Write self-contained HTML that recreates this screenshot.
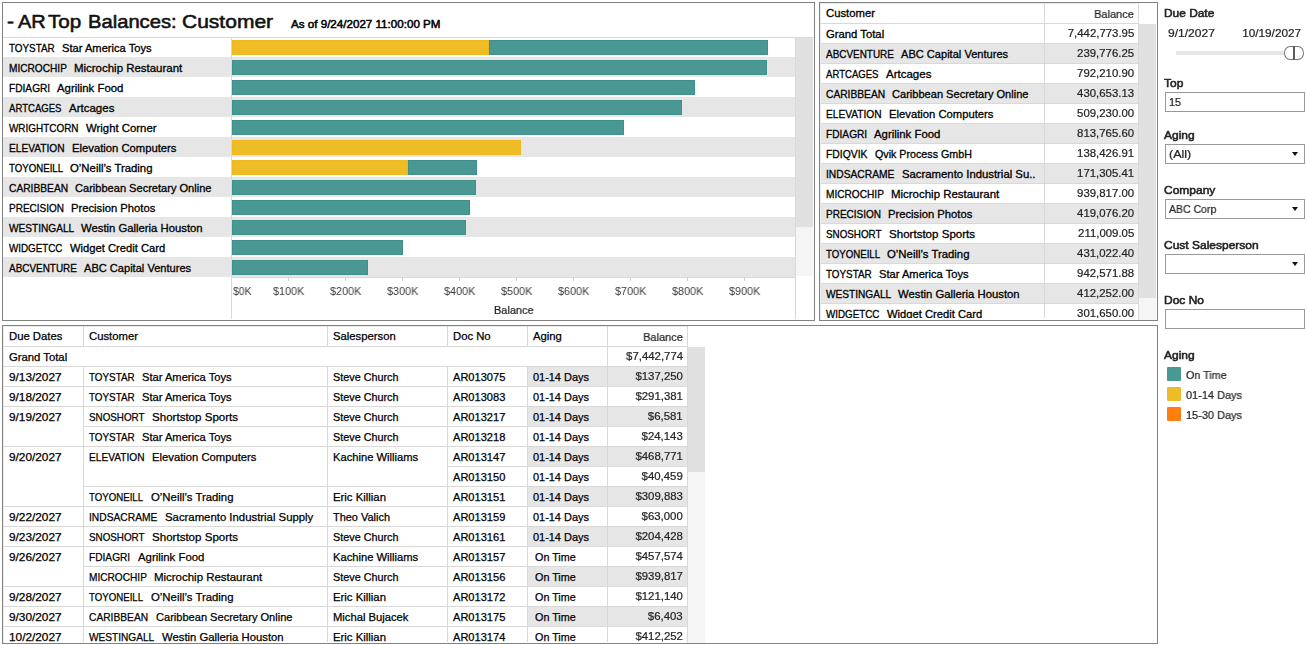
<!DOCTYPE html>
<html lang="en"><head><meta charset="utf-8"><title>AR Top Balances: Customer</title>
<style>
*{box-sizing:border-box;margin:0;padding:0}
html,body{width:1307px;height:645px;overflow:hidden;background:#fff}
body{position:relative;font-family:"Liberation Sans",sans-serif;font-size:11px;color:#111}
.panel{position:absolute;border:1px solid #828282;background:#fff}
.t{position:absolute;white-space:pre;line-height:14px;height:14px;font-size:11px;transform-origin:0 50%}
.m{color:#000;-webkit-text-stroke:0.3px #000}
.a{color:#3c3c3c;will-change:transform}
.n{color:#000;-webkit-text-stroke:0.25px #000}
.g{color:#242424;-webkit-text-stroke:0.22px #242424;will-change:transform}
.s{color:#222;-webkit-text-stroke:0.55px #222;will-change:transform}
.r{transform-origin:100% 50%}
.b{position:absolute}
</style></head>
<body>
<div class="panel" style="left:2px;top:2px;width:813px;height:319px"></div>
<h1 style="font-weight:normal;font-size:inherit">
<span class="t" style="left:7.20px;top:7.5px;height:28px;line-height:28px;font-size:18.5px;-webkit-text-stroke:0.55px #111;transform:scaleX(1.1342)">-</span>
<span class="t" style="left:17.60px;top:7.5px;height:28px;line-height:28px;font-size:18.5px;-webkit-text-stroke:0.55px #111;transform:scaleX(1.0777)">AR</span>
<span class="t" style="left:47.90px;top:7.5px;height:28px;line-height:28px;font-size:18.5px;-webkit-text-stroke:0.55px #111;transform:scaleX(1.1130)">Top</span>
<span class="t" style="left:88.10px;top:7.5px;height:28px;line-height:28px;font-size:18.5px;-webkit-text-stroke:0.55px #111;transform:scaleX(1.0905)">Balances:</span>
<span class="t" style="left:182.00px;top:7.5px;height:28px;line-height:28px;font-size:18.5px;-webkit-text-stroke:0.55px #111;transform:scaleX(1.1359)">Customer</span>
</h1>
<div class="t m" style="left:291.00px;top:17px;transform:scaleX(1.0551);-webkit-text-stroke:0.5px #000;">As of 9/24/2027 11:00:00 PM</div>
<div class="b" style="left:3px;top:37px;width:811px;height:1px;background:#d9d9d9;"></div>
<div class="t m" style="left:9.00px;top:41px;transform:scaleX(0.8972);">TOYSTAR</div>
<div class="t m" style="left:61.90px;top:41px;transform:scaleX(1.0130);">Star America Toys</div>
<div class="b" style="left:232px;top:40px;width:257px;height:15px;background:#EEBC27;border:1px solid #f0b81c"></div>
<div class="b" style="left:489px;top:40px;width:279px;height:15px;background:#499894;border:1px solid #3f8f8b"></div>
<div class="b" style="left:3px;top:57px;width:792px;height:20px;background:#e6e6e6;"></div>
<div class="t m" style="left:9.00px;top:61px;transform:scaleX(0.9197);">MICROCHIP</div>
<div class="t m" style="left:74.10px;top:61px;transform:scaleX(1.0410);">Microchip Restaurant</div>
<div class="b" style="left:232px;top:60px;width:535px;height:15px;background:#499894;border:1px solid #3f8f8b"></div>
<div class="t m" style="left:9.00px;top:81px;transform:scaleX(0.9232);">FDIAGRI</div>
<div class="t m" style="left:57.40px;top:81px;transform:scaleX(1.0342);">Agrilink Food</div>
<div class="b" style="left:232px;top:80px;width:463px;height:15px;background:#499894;border:1px solid #3f8f8b"></div>
<div class="b" style="left:3px;top:97px;width:792px;height:20px;background:#e6e6e6;"></div>
<div class="t m" style="left:9.00px;top:101px;transform:scaleX(0.8705);">ARTCAGES</div>
<div class="t m" style="left:68.70px;top:101px;transform:scaleX(1.0456);">Artcages</div>
<div class="b" style="left:232px;top:100px;width:450px;height:15px;background:#499894;border:1px solid #3f8f8b"></div>
<div class="t m" style="left:9.00px;top:121px;transform:scaleX(0.9026);">WRIGHTCORN</div>
<div class="t m" style="left:85.70px;top:121px;transform:scaleX(1.0327);">Wright Corner</div>
<div class="b" style="left:232px;top:120px;width:392px;height:15px;background:#499894;border:1px solid #3f8f8b"></div>
<div class="b" style="left:3px;top:137px;width:792px;height:20px;background:#e6e6e6;"></div>
<div class="t m" style="left:9.00px;top:141px;transform:scaleX(0.9250);">ELEVATION</div>
<div class="t m" style="left:71.80px;top:141px;transform:scaleX(1.0224);">Elevation Computers</div>
<div class="b" style="left:232px;top:140px;width:289px;height:15px;background:#EEBC27;border:1px solid #f0b81c"></div>
<div class="t m" style="left:9.00px;top:161px;transform:scaleX(0.8790);">TOYONEILL</div>
<div class="t m" style="left:70.30px;top:161px;transform:scaleX(1.0327);">O’Neill’s Trading</div>
<div class="b" style="left:232px;top:160px;width:176px;height:15px;background:#EEBC27;border:1px solid #f0b81c"></div>
<div class="b" style="left:408px;top:160px;width:69px;height:15px;background:#499894;border:1px solid #3f8f8b"></div>
<div class="b" style="left:3px;top:177px;width:792px;height:20px;background:#e6e6e6;"></div>
<div class="t m" style="left:9.00px;top:181px;transform:scaleX(0.9296);">CARIBBEAN</div>
<div class="t m" style="left:75.30px;top:181px;transform:scaleX(1.0055);">Caribbean Secretary Online</div>
<div class="b" style="left:232px;top:180px;width:244px;height:15px;background:#499894;border:1px solid #3f8f8b"></div>
<div class="t m" style="left:9.00px;top:201px;transform:scaleX(0.9089);">PRECISION</div>
<div class="t m" style="left:71.20px;top:201px;transform:scaleX(1.0212);">Precision Photos</div>
<div class="b" style="left:232px;top:200px;width:238px;height:15px;background:#499894;border:1px solid #3f8f8b"></div>
<div class="b" style="left:3px;top:217px;width:792px;height:20px;background:#e6e6e6;"></div>
<div class="t m" style="left:9.00px;top:221px;transform:scaleX(0.9195);">WESTINGALL</div>
<div class="t m" style="left:81.40px;top:221px;transform:scaleX(1.0270);">Westin Galleria Houston</div>
<div class="b" style="left:232px;top:220px;width:234px;height:15px;background:#499894;border:1px solid #3f8f8b"></div>
<div class="t m" style="left:9.00px;top:241px;transform:scaleX(0.8916);">WIDGETCC</div>
<div class="t m" style="left:69.60px;top:241px;transform:scaleX(1.0177);">Widget Credit Card</div>
<div class="b" style="left:232px;top:240px;width:171px;height:15px;background:#499894;border:1px solid #3f8f8b"></div>
<div class="b" style="left:3px;top:257px;width:792px;height:20px;background:#e6e6e6;"></div>
<div class="t m" style="left:9.00px;top:261px;transform:scaleX(0.9031);">ABCVENTURE</div>
<div class="t m" style="left:84.10px;top:261px;transform:scaleX(1.0067);">ABC Capital Ventures</div>
<div class="b" style="left:232px;top:260px;width:136px;height:15px;background:#499894;border:1px solid #3f8f8b"></div>
<div class="b" style="left:231px;top:38px;width:1px;height:281px;background:#d9d9d9;"></div>
<div class="b" style="left:795px;top:38px;width:1px;height:281px;background:#d9d9d9;"></div>
<div class="b" style="left:232px;top:277px;width:563px;height:1px;background:#d9d9d9;"></div>
<div class="b" style="left:796px;top:38px;width:17px;height:238px;background:#f5f5f5;"></div>
<div class="b" style="left:796px;top:38px;width:17px;height:189px;background:#e0e0e0;"></div>
<div class="t a" style="left:232.50px;top:284px;transform:scaleX(0.9500);">$0K</div>
<div class="b" style="left:288px;top:277px;width:1px;height:4px;background:#cfcfcf;"></div>
<div class="t a" style="left:272.85px;top:284px;transform:scaleX(0.9839);">$100K</div>
<div class="b" style="left:345px;top:277px;width:1px;height:4px;background:#cfcfcf;"></div>
<div class="t a" style="left:329.85px;top:284px;transform:scaleX(0.9839);">$200K</div>
<div class="b" style="left:402px;top:277px;width:1px;height:4px;background:#cfcfcf;"></div>
<div class="t a" style="left:386.85px;top:284px;transform:scaleX(0.9839);">$300K</div>
<div class="b" style="left:459px;top:277px;width:1px;height:4px;background:#cfcfcf;"></div>
<div class="t a" style="left:443.85px;top:284px;transform:scaleX(0.9839);">$400K</div>
<div class="b" style="left:516px;top:277px;width:1px;height:4px;background:#cfcfcf;"></div>
<div class="t a" style="left:500.85px;top:284px;transform:scaleX(0.9839);">$500K</div>
<div class="b" style="left:573px;top:277px;width:1px;height:4px;background:#cfcfcf;"></div>
<div class="t a" style="left:557.85px;top:284px;transform:scaleX(0.9839);">$600K</div>
<div class="b" style="left:630px;top:277px;width:1px;height:4px;background:#cfcfcf;"></div>
<div class="t a" style="left:614.85px;top:284px;transform:scaleX(0.9839);">$700K</div>
<div class="b" style="left:687px;top:277px;width:1px;height:4px;background:#cfcfcf;"></div>
<div class="t a" style="left:671.85px;top:284px;transform:scaleX(0.9839);">$800K</div>
<div class="b" style="left:744px;top:277px;width:1px;height:4px;background:#cfcfcf;"></div>
<div class="t a" style="left:728.85px;top:284px;transform:scaleX(0.9839);">$900K</div>
<div class="t g" style="left:493.95px;top:303px;transform:scaleX(0.9933);">Balance</div>
<div class="panel" style="left:819px;top:2px;width:339px;height:319px"></div>
<div class="b" style="left:820px;top:3px;width:319px;height:1px;background:#ececec;"></div>
<div class="b" style="left:820px;top:3px;width:1px;height:317px;background:#ececec;"></div>
<div class="t m" style="left:826.00px;top:6px;transform:scaleX(1.0260);">Customer</div>
<div class="t r g" style="right:173.00px;top:7px;transform:scaleX(0.9933);">Balance</div>
<div class="b" style="left:820px;top:23px;width:319px;height:1px;background:#d9d9d9;"></div>
<div class="t m" style="left:826.00px;top:27px;transform:scaleX(1.0260);">Grand Total</div>
<div class="t r g" style="right:173.00px;top:26px;transform:scaleX(1.0350);">7,442,773.95</div>
<div class="b" style="left:820px;top:43px;width:319px;height:1px;background:#d9d9d9;"></div>
<div class="b" style="left:821px;top:44px;width:318px;height:19px;background:#e6e6e6;"></div>
<div class="b" style="left:821px;top:63px;width:318px;height:1px;background:#d9d9d9;"></div>
<div class="t m" style="left:826.00px;top:47px;transform:scaleX(0.9031);">ABCVENTURE</div>
<div class="t m" style="left:901.10px;top:47px;transform:scaleX(1.0067);">ABC Capital Ventures</div>
<div class="t r g" style="right:173.00px;top:46px;transform:scaleX(1.0350);">239,776.25</div>
<div class="b" style="left:821px;top:83px;width:318px;height:1px;background:#d9d9d9;"></div>
<div class="t m" style="left:826.00px;top:67px;transform:scaleX(0.8705);">ARTCAGES</div>
<div class="t m" style="left:885.70px;top:67px;transform:scaleX(1.0456);">Artcages</div>
<div class="t r g" style="right:173.00px;top:66px;transform:scaleX(1.0350);">792,210.90</div>
<div class="b" style="left:821px;top:84px;width:318px;height:19px;background:#e6e6e6;"></div>
<div class="b" style="left:821px;top:103px;width:318px;height:1px;background:#d9d9d9;"></div>
<div class="t m" style="left:826.00px;top:87px;transform:scaleX(0.9296);">CARIBBEAN</div>
<div class="t m" style="left:892.30px;top:87px;transform:scaleX(1.0055);">Caribbean Secretary Online</div>
<div class="t r g" style="right:173.00px;top:86px;transform:scaleX(1.0350);">430,653.13</div>
<div class="b" style="left:821px;top:123px;width:318px;height:1px;background:#d9d9d9;"></div>
<div class="t m" style="left:826.00px;top:107px;transform:scaleX(0.9250);">ELEVATION</div>
<div class="t m" style="left:888.80px;top:107px;transform:scaleX(1.0224);">Elevation Computers</div>
<div class="t r g" style="right:173.00px;top:106px;transform:scaleX(1.0350);">509,230.00</div>
<div class="b" style="left:821px;top:124px;width:318px;height:19px;background:#e6e6e6;"></div>
<div class="b" style="left:821px;top:143px;width:318px;height:1px;background:#d9d9d9;"></div>
<div class="t m" style="left:826.00px;top:127px;transform:scaleX(0.9232);">FDIAGRI</div>
<div class="t m" style="left:874.40px;top:127px;transform:scaleX(1.0342);">Agrilink Food</div>
<div class="t r g" style="right:173.00px;top:126px;transform:scaleX(1.0350);">813,765.60</div>
<div class="b" style="left:821px;top:163px;width:318px;height:1px;background:#d9d9d9;"></div>
<div class="t m" style="left:826.00px;top:147px;transform:scaleX(0.9428);">FDIQVIK</div>
<div class="t m" style="left:874.70px;top:147px;transform:scaleX(0.9725);">Qvik Process GmbH</div>
<div class="t r g" style="right:173.00px;top:146px;transform:scaleX(1.0350);">138,426.91</div>
<div class="b" style="left:821px;top:164px;width:318px;height:19px;background:#e6e6e6;"></div>
<div class="b" style="left:821px;top:183px;width:318px;height:1px;background:#d9d9d9;"></div>
<div class="t m" style="left:826.00px;top:167px;transform:scaleX(0.9326);">INDSACRAME</div>
<div class="t m" style="left:901.60px;top:167px;transform:scaleX(1.0299);">Sacramento Industrial Su..</div>
<div class="t r g" style="right:173.00px;top:166px;transform:scaleX(1.0350);">171,305.41</div>
<div class="b" style="left:821px;top:203px;width:318px;height:1px;background:#d9d9d9;"></div>
<div class="t m" style="left:826.00px;top:187px;transform:scaleX(0.9197);">MICROCHIP</div>
<div class="t m" style="left:891.10px;top:187px;transform:scaleX(1.0410);">Microchip Restaurant</div>
<div class="t r g" style="right:173.00px;top:186px;transform:scaleX(1.0350);">939,817.00</div>
<div class="b" style="left:821px;top:204px;width:318px;height:19px;background:#e6e6e6;"></div>
<div class="b" style="left:821px;top:223px;width:318px;height:1px;background:#d9d9d9;"></div>
<div class="t m" style="left:826.00px;top:207px;transform:scaleX(0.9089);">PRECISION</div>
<div class="t m" style="left:888.20px;top:207px;transform:scaleX(1.0212);">Precision Photos</div>
<div class="t r g" style="right:173.00px;top:206px;transform:scaleX(1.0350);">419,076.20</div>
<div class="b" style="left:821px;top:243px;width:318px;height:1px;background:#d9d9d9;"></div>
<div class="t m" style="left:826.00px;top:227px;transform:scaleX(0.8931);">SNOSHORT</div>
<div class="t m" style="left:888.70px;top:227px;transform:scaleX(1.0508);">Shortstop Sports</div>
<div class="t r g" style="right:173.00px;top:226px;transform:scaleX(1.0350);">211,009.05</div>
<div class="b" style="left:821px;top:244px;width:318px;height:19px;background:#e6e6e6;"></div>
<div class="b" style="left:821px;top:263px;width:318px;height:1px;background:#d9d9d9;"></div>
<div class="t m" style="left:826.00px;top:247px;transform:scaleX(0.8790);">TOYONEILL</div>
<div class="t m" style="left:887.30px;top:247px;transform:scaleX(1.0327);">O’Neill’s Trading</div>
<div class="t r g" style="right:173.00px;top:246px;transform:scaleX(1.0350);">431,022.40</div>
<div class="b" style="left:821px;top:283px;width:318px;height:1px;background:#d9d9d9;"></div>
<div class="t m" style="left:826.00px;top:267px;transform:scaleX(0.8972);">TOYSTAR</div>
<div class="t m" style="left:878.90px;top:267px;transform:scaleX(1.0130);">Star America Toys</div>
<div class="t r g" style="right:173.00px;top:266px;transform:scaleX(1.0350);">942,571.88</div>
<div class="b" style="left:821px;top:284px;width:318px;height:19px;background:#e6e6e6;"></div>
<div class="b" style="left:821px;top:303px;width:318px;height:1px;background:#d9d9d9;"></div>
<div class="t m" style="left:826.00px;top:287px;transform:scaleX(0.9195);">WESTINGALL</div>
<div class="t m" style="left:898.40px;top:287px;transform:scaleX(1.0270);">Westin Galleria Houston</div>
<div class="t r g" style="right:173.00px;top:286px;transform:scaleX(1.0350);">412,252.00</div>
<div class="t m" style="left:826.00px;top:307px;transform:scaleX(0.8916);">WIDGETCC</div>
<div class="t m" style="left:886.60px;top:307px;transform:scaleX(1.0177);">Widget Credit Card</div>
<div class="t r g" style="right:173.00px;top:306px;transform:scaleX(1.0350);">301,650.00</div>
<div class="b" style="left:1044px;top:3px;width:1px;height:317px;background:#d9d9d9;"></div>
<div class="b" style="left:1138px;top:3px;width:1px;height:317px;background:#d9d9d9;"></div>
<div class="b" style="left:1139px;top:24px;width:17px;height:296px;background:#f5f5f5;"></div>
<div class="b" style="left:1139px;top:24px;width:17px;height:274px;background:#e0e0e0;"></div>
<div class="panel" style="left:2px;top:325px;width:1156px;height:319px"></div>
<div class="t n" style="left:9.00px;top:329px;transform:scaleX(1.0260);">Due Dates</div>
<div class="t n" style="left:89.00px;top:329px;transform:scaleX(1.0260);">Customer</div>
<div class="t n" style="left:333.00px;top:329px;transform:scaleX(1.0260);">Salesperson</div>
<div class="t n" style="left:453.00px;top:329px;transform:scaleX(1.0260);">Doc No</div>
<div class="t n" style="left:533.00px;top:329px;transform:scaleX(1.0260);">Aging</div>
<div class="t r g" style="right:624.00px;top:330px;transform:scaleX(0.9933);">Balance</div>
<div class="t n" style="left:9.00px;top:350px;transform:scaleX(1.0260);">Grand Total</div>
<div class="t r g" style="right:624.00px;top:349px;transform:scaleX(1.0350);">$7,442,774</div>
<div class="b" style="left:527px;top:367px;width:160px;height:19px;background:#e6e6e6;"></div>
<div class="t n" style="left:9.00px;top:370px;transform:scaleX(1.0748);">9/13/2027</div>
<div class="t n" style="left:89.20px;top:370px;transform:scaleX(0.8972);">TOYSTAR</div>
<div class="t n" style="left:142.10px;top:370px;transform:scaleX(1.0130);">Star America Toys</div>
<div class="t n" style="left:333.00px;top:370px;transform:scaleX(0.9827);">Steve Church</div>
<div class="t n" style="left:453.00px;top:370px;transform:scaleX(1.0058);">AR013075</div>
<div class="t n" style="left:533.00px;top:370px;transform:scaleX(0.9935);">01-14 Days</div>
<div class="t r g" style="right:624.00px;top:369px;transform:scaleX(1.0350);">$137,250</div>
<div class="t n" style="left:9.00px;top:390px;transform:scaleX(1.0748);">9/18/2027</div>
<div class="t n" style="left:89.20px;top:390px;transform:scaleX(0.8972);">TOYSTAR</div>
<div class="t n" style="left:142.10px;top:390px;transform:scaleX(1.0130);">Star America Toys</div>
<div class="t n" style="left:333.00px;top:390px;transform:scaleX(0.9827);">Steve Church</div>
<div class="t n" style="left:453.00px;top:390px;transform:scaleX(1.0058);">AR013083</div>
<div class="t n" style="left:533.00px;top:390px;transform:scaleX(0.9935);">01-14 Days</div>
<div class="t r g" style="right:624.00px;top:389px;transform:scaleX(1.0350);">$291,381</div>
<div class="b" style="left:527px;top:407px;width:160px;height:19px;background:#e6e6e6;"></div>
<div class="t n" style="left:9.00px;top:410px;transform:scaleX(1.0748);">9/19/2027</div>
<div class="t n" style="left:89.20px;top:410px;transform:scaleX(0.8931);">SNOSHORT</div>
<div class="t n" style="left:151.90px;top:410px;transform:scaleX(1.0508);">Shortstop Sports</div>
<div class="t n" style="left:333.00px;top:410px;transform:scaleX(0.9827);">Steve Church</div>
<div class="t n" style="left:453.00px;top:410px;transform:scaleX(1.0058);">AR013217</div>
<div class="t n" style="left:533.00px;top:410px;transform:scaleX(0.9935);">01-14 Days</div>
<div class="t r g" style="right:624.00px;top:409px;transform:scaleX(1.0350);">$6,581</div>
<div class="t n" style="left:89.20px;top:430px;transform:scaleX(0.8972);">TOYSTAR</div>
<div class="t n" style="left:142.10px;top:430px;transform:scaleX(1.0130);">Star America Toys</div>
<div class="t n" style="left:333.00px;top:430px;transform:scaleX(0.9827);">Steve Church</div>
<div class="t n" style="left:453.00px;top:430px;transform:scaleX(1.0058);">AR013218</div>
<div class="t n" style="left:533.00px;top:430px;transform:scaleX(0.9935);">01-14 Days</div>
<div class="t r g" style="right:624.00px;top:429px;transform:scaleX(1.0350);">$24,143</div>
<div class="b" style="left:527px;top:447px;width:160px;height:19px;background:#e6e6e6;"></div>
<div class="t n" style="left:9.00px;top:450px;transform:scaleX(1.0748);">9/20/2027</div>
<div class="t n" style="left:89.20px;top:450px;transform:scaleX(0.9250);">ELEVATION</div>
<div class="t n" style="left:152.00px;top:450px;transform:scaleX(1.0224);">Elevation Computers</div>
<div class="t n" style="left:333.00px;top:450px;transform:scaleX(1.0161);">Kachine Williams</div>
<div class="t n" style="left:453.00px;top:450px;transform:scaleX(1.0058);">AR013147</div>
<div class="t n" style="left:533.00px;top:450px;transform:scaleX(0.9935);">01-14 Days</div>
<div class="t r g" style="right:624.00px;top:449px;transform:scaleX(1.0350);">$468,771</div>
<div class="t n" style="left:453.00px;top:470px;transform:scaleX(1.0058);">AR013150</div>
<div class="t n" style="left:533.00px;top:470px;transform:scaleX(0.9935);">01-14 Days</div>
<div class="t r g" style="right:624.00px;top:469px;transform:scaleX(1.0350);">$40,459</div>
<div class="b" style="left:527px;top:487px;width:160px;height:19px;background:#e6e6e6;"></div>
<div class="t n" style="left:89.20px;top:490px;transform:scaleX(0.8790);">TOYONEILL</div>
<div class="t n" style="left:150.50px;top:490px;transform:scaleX(1.0327);">O’Neill’s Trading</div>
<div class="t n" style="left:333.00px;top:490px;transform:scaleX(1.0319);">Eric Killian</div>
<div class="t n" style="left:453.00px;top:490px;transform:scaleX(1.0058);">AR013151</div>
<div class="t n" style="left:533.00px;top:490px;transform:scaleX(0.9935);">01-14 Days</div>
<div class="t r g" style="right:624.00px;top:489px;transform:scaleX(1.0350);">$309,883</div>
<div class="t n" style="left:9.00px;top:510px;transform:scaleX(1.0748);">9/22/2027</div>
<div class="t n" style="left:89.20px;top:510px;transform:scaleX(0.9326);">INDSACRAME</div>
<div class="t n" style="left:164.80px;top:510px;transform:scaleX(1.0321);">Sacramento Industrial Supply</div>
<div class="t n" style="left:333.00px;top:510px;transform:scaleX(0.9951);">Theo Valich</div>
<div class="t n" style="left:453.00px;top:510px;transform:scaleX(1.0058);">AR013159</div>
<div class="t n" style="left:533.00px;top:510px;transform:scaleX(0.9935);">01-14 Days</div>
<div class="t r g" style="right:624.00px;top:509px;transform:scaleX(1.0350);">$63,000</div>
<div class="b" style="left:527px;top:527px;width:160px;height:19px;background:#e6e6e6;"></div>
<div class="t n" style="left:9.00px;top:530px;transform:scaleX(1.0748);">9/23/2027</div>
<div class="t n" style="left:89.20px;top:530px;transform:scaleX(0.8931);">SNOSHORT</div>
<div class="t n" style="left:151.90px;top:530px;transform:scaleX(1.0508);">Shortstop Sports</div>
<div class="t n" style="left:333.00px;top:530px;transform:scaleX(0.9827);">Steve Church</div>
<div class="t n" style="left:453.00px;top:530px;transform:scaleX(1.0058);">AR013161</div>
<div class="t n" style="left:533.00px;top:530px;transform:scaleX(0.9935);">01-14 Days</div>
<div class="t r g" style="right:624.00px;top:529px;transform:scaleX(1.0350);">$204,428</div>
<div class="t n" style="left:9.00px;top:550px;transform:scaleX(1.0748);">9/26/2027</div>
<div class="t n" style="left:89.20px;top:550px;transform:scaleX(0.9232);">FDIAGRI</div>
<div class="t n" style="left:137.60px;top:550px;transform:scaleX(1.0342);">Agrilink Food</div>
<div class="t n" style="left:333.00px;top:550px;transform:scaleX(1.0161);">Kachine Williams</div>
<div class="t n" style="left:453.00px;top:550px;transform:scaleX(1.0058);">AR013157</div>
<div class="t n" style="left:535.00px;top:550px;transform:scaleX(0.9789);">On Time</div>
<div class="t r g" style="right:624.00px;top:549px;transform:scaleX(1.0350);">$457,574</div>
<div class="b" style="left:527px;top:567px;width:160px;height:19px;background:#e6e6e6;"></div>
<div class="t n" style="left:89.20px;top:570px;transform:scaleX(0.9197);">MICROCHIP</div>
<div class="t n" style="left:154.30px;top:570px;transform:scaleX(1.0410);">Microchip Restaurant</div>
<div class="t n" style="left:333.00px;top:570px;transform:scaleX(0.9827);">Steve Church</div>
<div class="t n" style="left:453.00px;top:570px;transform:scaleX(1.0058);">AR013156</div>
<div class="t n" style="left:535.00px;top:570px;transform:scaleX(0.9789);">On Time</div>
<div class="t r g" style="right:624.00px;top:569px;transform:scaleX(1.0350);">$939,817</div>
<div class="t n" style="left:9.00px;top:590px;transform:scaleX(1.0748);">9/28/2027</div>
<div class="t n" style="left:89.20px;top:590px;transform:scaleX(0.8790);">TOYONEILL</div>
<div class="t n" style="left:150.50px;top:590px;transform:scaleX(1.0327);">O’Neill’s Trading</div>
<div class="t n" style="left:333.00px;top:590px;transform:scaleX(1.0319);">Eric Killian</div>
<div class="t n" style="left:453.00px;top:590px;transform:scaleX(1.0058);">AR013172</div>
<div class="t n" style="left:535.00px;top:590px;transform:scaleX(0.9789);">On Time</div>
<div class="t r g" style="right:624.00px;top:589px;transform:scaleX(1.0350);">$121,140</div>
<div class="b" style="left:527px;top:607px;width:160px;height:19px;background:#e6e6e6;"></div>
<div class="t n" style="left:9.00px;top:610px;transform:scaleX(1.0748);">9/30/2027</div>
<div class="t n" style="left:89.20px;top:610px;transform:scaleX(0.9296);">CARIBBEAN</div>
<div class="t n" style="left:155.50px;top:610px;transform:scaleX(1.0055);">Caribbean Secretary Online</div>
<div class="t n" style="left:333.00px;top:610px;transform:scaleX(1.0191);">Michal Bujacek</div>
<div class="t n" style="left:453.00px;top:610px;transform:scaleX(1.0058);">AR013175</div>
<div class="t n" style="left:535.00px;top:610px;transform:scaleX(0.9789);">On Time</div>
<div class="t r g" style="right:624.00px;top:609px;transform:scaleX(1.0350);">$6,403</div>
<div class="t n" style="left:9.00px;top:630px;transform:scaleX(1.0748);">10/2/2027</div>
<div class="t n" style="left:89.20px;top:630px;transform:scaleX(0.9195);">WESTINGALL</div>
<div class="t n" style="left:161.60px;top:630px;transform:scaleX(1.0270);">Westin Galleria Houston</div>
<div class="t n" style="left:333.00px;top:630px;transform:scaleX(1.0319);">Eric Killian</div>
<div class="t n" style="left:453.00px;top:630px;transform:scaleX(1.0058);">AR013174</div>
<div class="t n" style="left:535.00px;top:630px;transform:scaleX(0.9789);">On Time</div>
<div class="t r g" style="right:624.00px;top:629px;transform:scaleX(1.0350);">$412,252</div>
<div class="b" style="left:3px;top:326px;width:684px;height:1px;background:#ececec;"></div>
<div class="b" style="left:3px;top:326px;width:1px;height:317px;background:#ececec;"></div>
<div class="b" style="left:3px;top:346px;width:684px;height:1px;background:#d9d9d9;"></div>
<div class="b" style="left:3px;top:366px;width:684px;height:1px;background:#d9d9d9;"></div>
<div class="b" style="left:3px;top:386px;width:684px;height:1px;background:#d9d9d9;"></div>
<div class="b" style="left:3px;top:406px;width:684px;height:1px;background:#d9d9d9;"></div>
<div class="b" style="left:83px;top:426px;width:604px;height:1px;background:#d9d9d9;"></div>
<div class="b" style="left:3px;top:446px;width:684px;height:1px;background:#d9d9d9;"></div>
<div class="b" style="left:447px;top:466px;width:240px;height:1px;background:#d9d9d9;"></div>
<div class="b" style="left:83px;top:486px;width:604px;height:1px;background:#d9d9d9;"></div>
<div class="b" style="left:3px;top:506px;width:684px;height:1px;background:#d9d9d9;"></div>
<div class="b" style="left:3px;top:526px;width:684px;height:1px;background:#d9d9d9;"></div>
<div class="b" style="left:3px;top:546px;width:684px;height:1px;background:#d9d9d9;"></div>
<div class="b" style="left:83px;top:566px;width:604px;height:1px;background:#d9d9d9;"></div>
<div class="b" style="left:3px;top:586px;width:684px;height:1px;background:#d9d9d9;"></div>
<div class="b" style="left:3px;top:606px;width:684px;height:1px;background:#d9d9d9;"></div>
<div class="b" style="left:3px;top:626px;width:684px;height:1px;background:#d9d9d9;"></div>
<div class="b" style="left:83px;top:326px;width:1px;height:20px;background:#d9d9d9;"></div>
<div class="b" style="left:83px;top:366px;width:1px;height:277px;background:#d9d9d9;"></div>
<div class="b" style="left:327px;top:326px;width:1px;height:20px;background:#d9d9d9;"></div>
<div class="b" style="left:327px;top:366px;width:1px;height:277px;background:#d9d9d9;"></div>
<div class="b" style="left:447px;top:326px;width:1px;height:20px;background:#d9d9d9;"></div>
<div class="b" style="left:447px;top:366px;width:1px;height:277px;background:#d9d9d9;"></div>
<div class="b" style="left:527px;top:326px;width:1px;height:20px;background:#d9d9d9;"></div>
<div class="b" style="left:527px;top:366px;width:1px;height:277px;background:#d9d9d9;"></div>
<div class="b" style="left:607px;top:326px;width:1px;height:317px;background:#d9d9d9;"></div>
<div class="b" style="left:687px;top:326px;width:1px;height:317px;background:#d9d9d9;"></div>
<div class="b" style="left:688px;top:347px;width:17px;height:296px;background:#f5f5f5;"></div>
<div class="b" style="left:688px;top:347px;width:17px;height:125px;background:#e0e0e0;"></div>
<div class="b" style="left:821px;top:318px;width:317px;height:2px;background:#fff;"></div>
<div class="b" style="left:4px;top:642px;width:683px;height:1px;background:#fff;"></div>
<div class="b" style="left:0px;top:321px;width:1160px;height:4px;background:#fff;"></div>
<div class="b" style="left:0px;top:644px;width:1307px;height:1px;background:#fff;"></div>
<div class="b" style="left:819px;top:320px;width:339px;height:1px;background:#828282;"></div>
<div class="b" style="left:2px;top:320px;width:813px;height:1px;background:#828282;"></div>
<div class="b" style="left:2px;top:643px;width:1156px;height:1px;background:#828282;"></div>
<div class="t s" style="left:1163.90px;top:6px;transform:scaleX(1.0351);font-size:11.5px;">Due Date</div>
<div class="t g" style="left:1168.00px;top:26px;transform:scaleX(1.0951);">9/1/2027</div>
<div class="t r g" style="right:6.00px;top:26px;transform:scaleX(1.0697);">10/19/2027</div>
<div class="b" style="left:1176px;top:51px;width:108px;height:4px;background:#e6e6e6;"></div>
<div class="b" style="left:1284px;top:46px;width:20px;height:14px;border:1px solid #777;border-radius:6px/7px;background:#fff"></div>
<div class="b" style="left:1293px;top:46px;width:2px;height:14px;background:#5a5a5a;"></div>
<div class="t s" style="left:1163.90px;top:75.5px;transform:scaleX(1.0430);font-size:11.5px;">Top</div>
<div class="b" style="left:1165px;top:92px;width:140px;height:20px;border:1px solid #999;background:#fff"></div>
<div class="t g" style="left:1169.00px;top:95px;transform:scaleX(0.9878);">15</div>
<div class="t s" style="left:1163.90px;top:127.5px;transform:scaleX(1.0430);font-size:11.5px;">Aging</div>
<div class="b" style="left:1165px;top:144px;width:140px;height:20px;border:1px solid #999;background:#fff"></div>
<div class="t g" style="left:1169.00px;top:147px;transform:scaleX(1.1348);">(All)</div>
<div class="b" style="left:1292px;top:152px;width:0;height:0;border-left:3.5px solid transparent;border-right:3.5px solid transparent;border-top:4px solid #111"></div>
<div class="t s" style="left:1163.90px;top:182.5px;transform:scaleX(1.0430);font-size:11.5px;">Company</div>
<div class="b" style="left:1165px;top:199px;width:140px;height:20px;border:1px solid #999;background:#fff"></div>
<div class="t g" style="left:1169.00px;top:202px;transform:scaleX(0.9550);">ABC Corp</div>
<div class="b" style="left:1292px;top:207px;width:0;height:0;border-left:3.5px solid transparent;border-right:3.5px solid transparent;border-top:4px solid #111"></div>
<div class="t s" style="left:1163.90px;top:237.5px;transform:scaleX(1.0430);font-size:11.5px;">Cust Salesperson</div>
<div class="b" style="left:1165px;top:254px;width:140px;height:20px;border:1px solid #999;background:#fff"></div>
<div class="b" style="left:1292px;top:262px;width:0;height:0;border-left:3.5px solid transparent;border-right:3.5px solid transparent;border-top:4px solid #111"></div>
<div class="t s" style="left:1163.90px;top:292.5px;transform:scaleX(1.0430);font-size:11.5px;">Doc No</div>
<div class="b" style="left:1165px;top:309px;width:140px;height:20px;border:1px solid #999;background:#fff"></div>
<div class="t s" style="left:1163.90px;top:347.5px;transform:scaleX(1.0430);font-size:11.5px;">Aging</div>
<div class="b" style="left:1167px;top:367px;width:14px;height:14px;background:#499894;border-radius:1px"></div>
<div class="t g" style="left:1186.00px;top:368px;transform:scaleX(0.9789);">On Time</div>
<div class="b" style="left:1167px;top:387px;width:14px;height:14px;background:#EEBC27;border-radius:1px"></div>
<div class="t g" style="left:1186.00px;top:388px;transform:scaleX(0.9935);">01-14 Days</div>
<div class="b" style="left:1167px;top:407px;width:14px;height:14px;background:#FF7F0E;border-radius:1px"></div>
<div class="t g" style="left:1186.00px;top:408px;transform:scaleX(0.9935);">15-30 Days</div>
</body></html>
